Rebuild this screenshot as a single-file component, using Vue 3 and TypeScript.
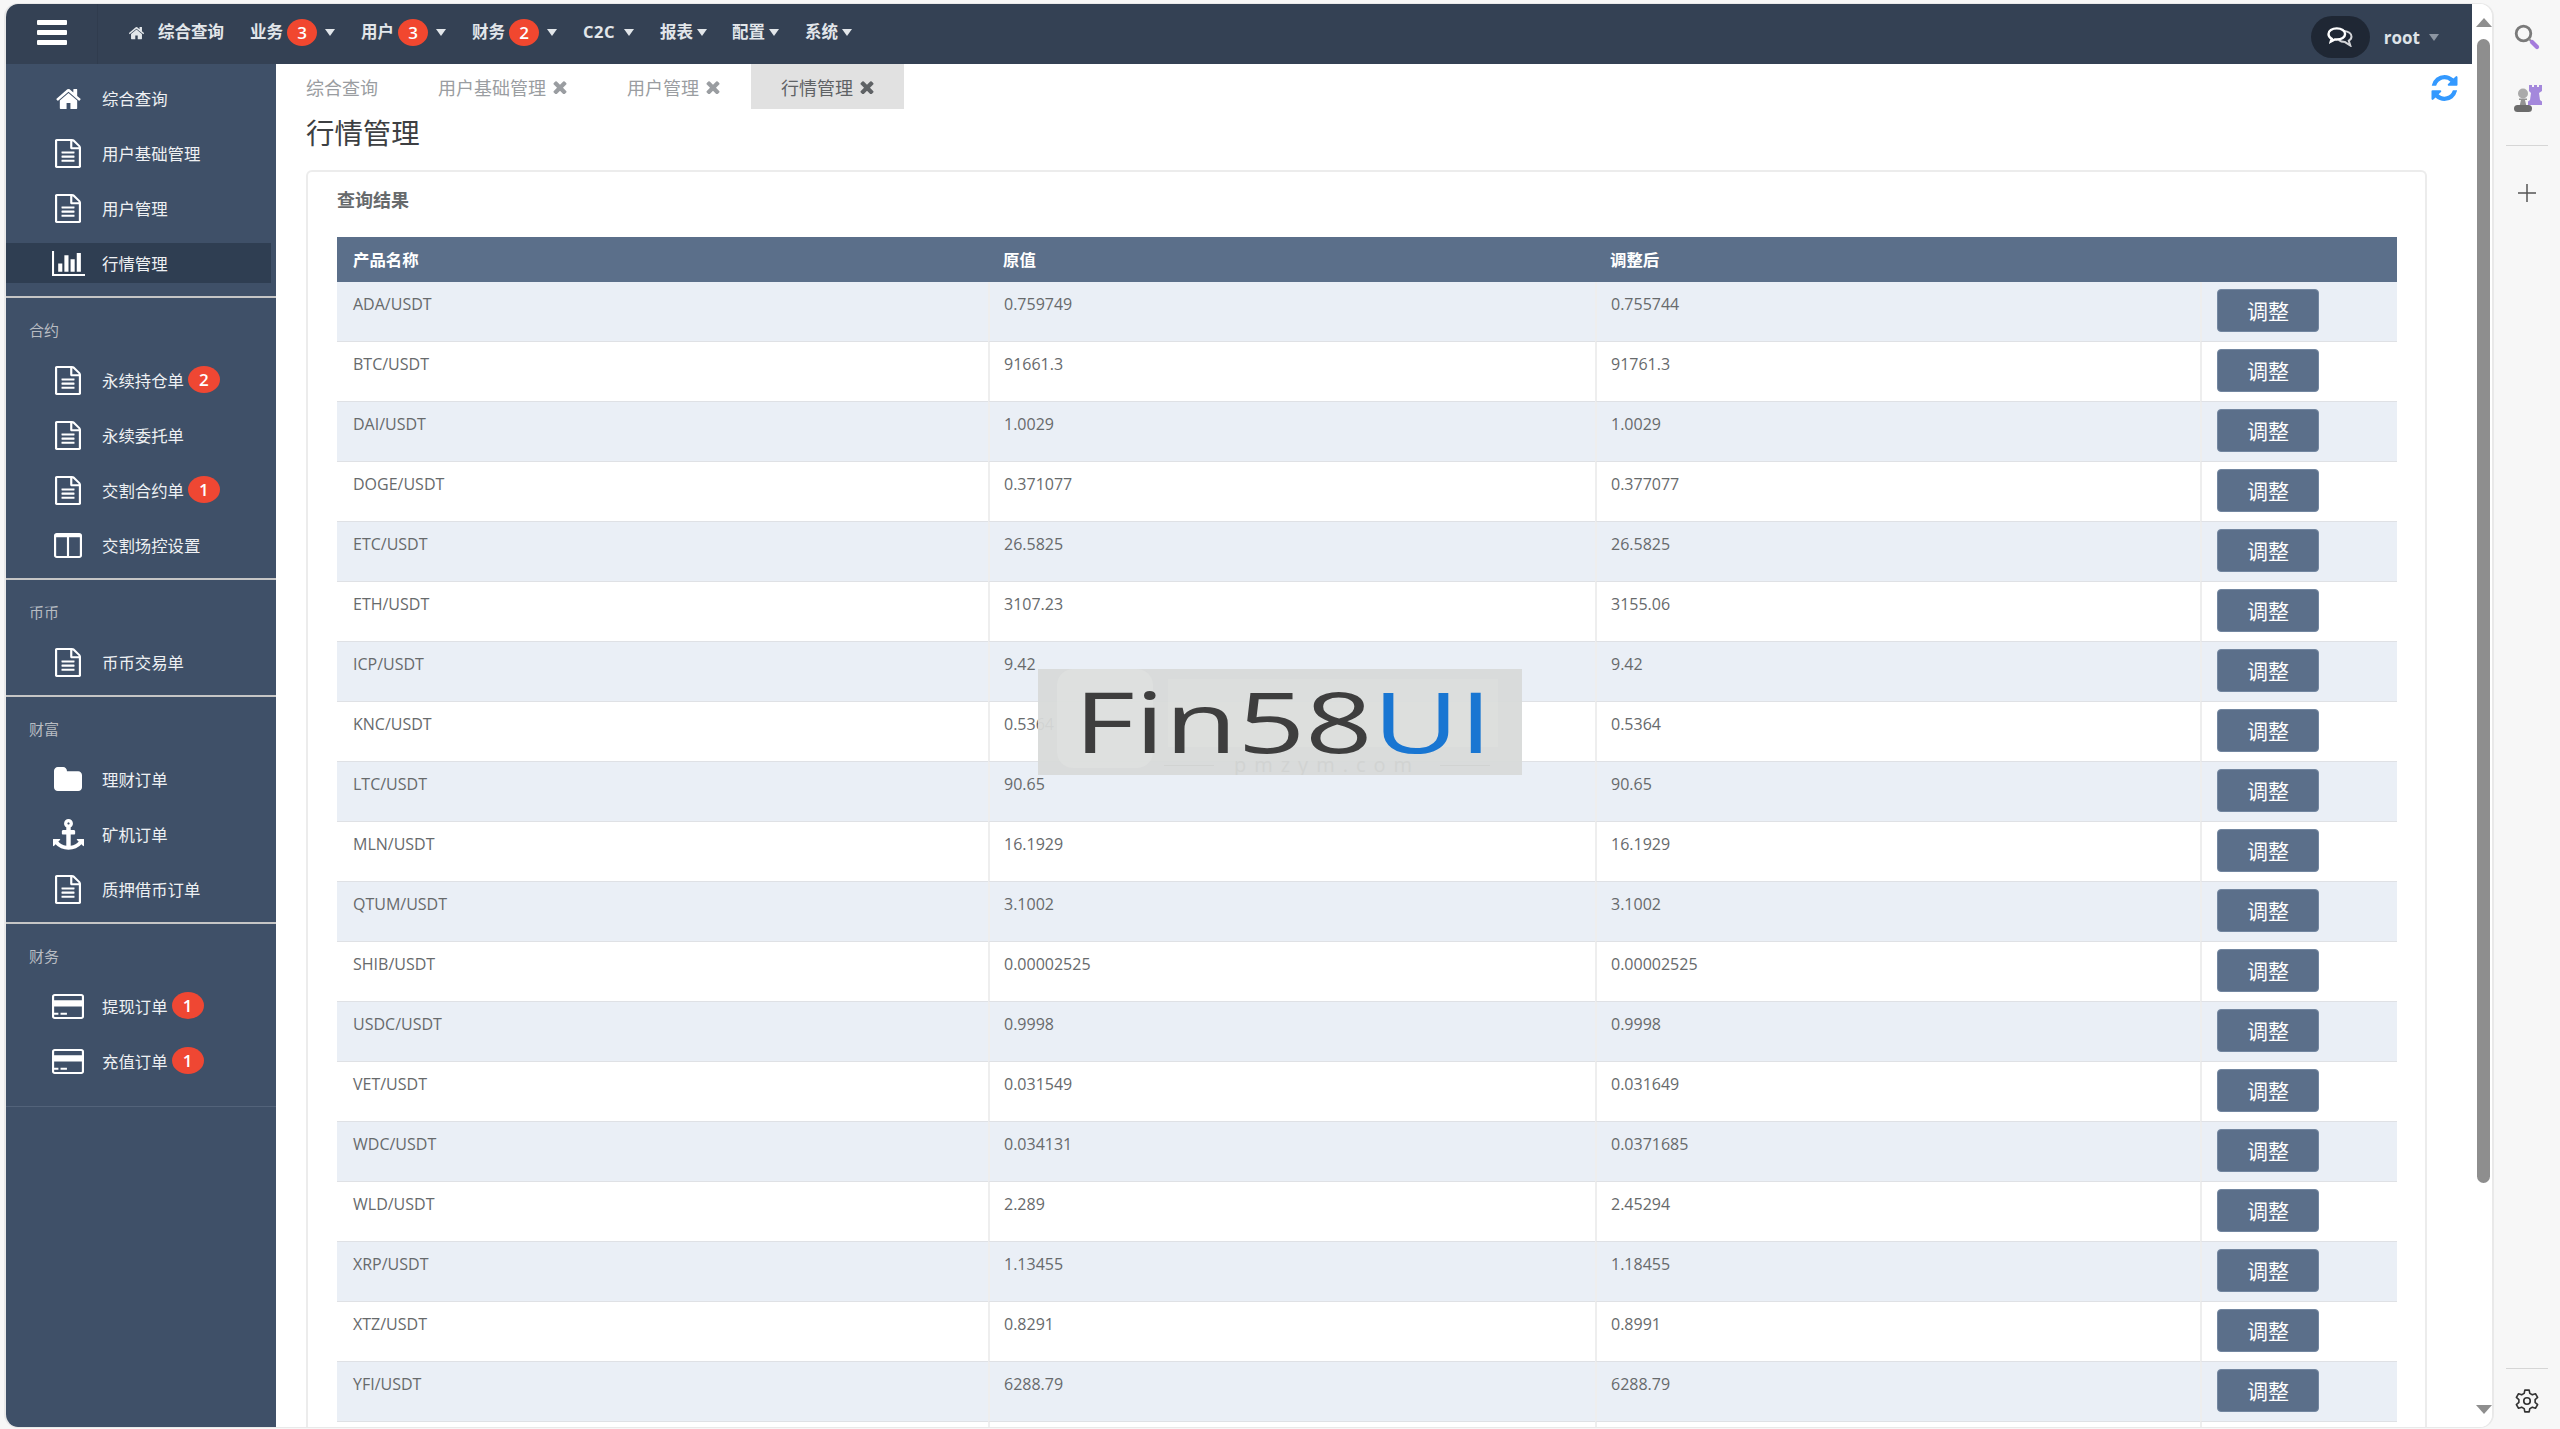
<script setup lang="ts">
const P: Record<string, { vb: string; d: string }> = {
  home: { vb: '0 128 1792 1408', d: 'M1472 992v480q0 26-19 45t-45 19h-384v-384h-256v384h-384q-26 0-45-19t-19-45v-480q0-1 .5-3t.5-3l575-474 575 474q1 2 1 6zm223-69l-62 74q-8 9-21 11h-3q-13 0-21-7l-692-577-692 577q-12 8-24 7-13-2-21-11l-62-74q-8-10-7-23.5t11-21.5l719-599q32-26 76-26t76 26l244 204v-195q0-14 9-23t23-9h192q14 0 23 9t9 23v408l219 182q10 8 11 21.5t-7 23.5z' },
  file: { vb: '128 0 1536 1792', d: 'M1596 380q28 28 48 76t20 88v1152q0 40-28 68t-68 28h-1344q-40 0-68-28t-28-68v-1600q0-40 28-68t68-28h896q40 0 88 20t76 48zm-444-244v376h376q-10-29-22-41l-313-313q-12-12-41-22zm384 1528v-1024h-416q-40 0-68-28t-28-68v-416h-768v1536h1280zm-1024-864q0-14 9-23t23-9h704q14 0 23 9t9 23v64q0 14-9 23t-23 9h-704q-14 0-23-9t-9-23v-64zm736 224q14 0 23 9t9 23v64q0 14-9 23t-23 9h-704q-14 0-23-9t-9-23v-64q0-14 9-23t23-9h704zm0 256q14 0 23 9t9 23v64q0 14-9 23t-23 9h-704q-14 0-23-9t-9-23v-64q0-14 9-23t23-9h704z' },
  chart: { vb: '0 128 2048 1536', d: 'M640 896v512h-256v-512h256zm384-512v1024h-256v-1024h256zm1024 1152v128h-2048v-1536h128v1408h1920zm-640-896v768h-256v-768h256zm384-384v1152h-256v-1152h256z' },
  columns: { vb: '64 128 1664 1536', d: 'M224 1536h608v-1152h-640v1120q0 13 9.5 22.5t22.5 9.5zm1376-32v-1120h-640v1152h608q13 0 22.5-9.5t9.5-22.5zm128-1216v1216q0 66-47 113t-113 47h-1344q-66 0-113-47t-47-113v-1216q0-66 47-113t113-47h1344q66 0 113 47t47 113z' },
  folder: { vb: '64 128 1664 1408', d: 'M1728 608v704q0 92-66 158t-158 66h-1216q-92 0-158-66t-66-158v-960q0-92 66-158t158-66h320q92 0 158 66t66 158v32h672q92 0 158 66t66 158z' },
  anchor: { vb: '0 0 1792 1792', d: 'M960 256q0-26-19-45t-45-19-45 19-19 45 19 45 45 19 45-19 19-45zm832 928v352q0 22-20 30-8 2-12 2-12 0-23-9l-93-93q-119 143-318.5 226.5t-429.5 83.5-429.5-83.5-318.5-226.5l-93 93q-9 9-23 9-4 0-12-2-20-8-20-30v-352q0-14 9-23t23-9h352q22 0 30 20 8 19-7 35l-100 100q67 91 189.5 153.5t271.5 82.5v-647h-192q-26 0-45-19t-19-45v-128q0-26 19-45t45-19h192v-163q-58-34-93-92.5t-35-128.5q0-106 75-181t181-75 181 75 75 181q0 70-35 128.5t-93 92.5v163h192q26 0 45 19t19 45v128q0 26-19 45t-45 19h-192v647q149-20 271.5-82.5t189.5-153.5l-100-100q-15-16-7-35 8-20 30-20h352q14 0 23 9t9 23z' },
  card: { vb: '0 128 1920 1536', d: 'M1760 128q66 0 113 47t47 113v1216q0 66-47 113t-113 47h-1600q-66 0-113-47t-47-113v-1216q0-66 47-113t113-47h1600zm-1600 128q-13 0-22.5 9.5t-9.5 22.5v224h1664v-224q0-13-9.5-22.5t-22.5-9.5h-1600zm1600 1280q13 0 22.5-9.5t9.5-22.5v-608h-1664v608q0 13 9.5 22.5t22.5 9.5h1600zm-1632-128v-128h256v128h-256zm384 0v-128h384v128h-384z' },
  times: { vb: '256 256 1280 1280', d: 'M1490 1322q0 40-28 68l-136 136q-28 28-68 28t-68-28l-294-294-294 294q-28 28-68 28t-68-28l-136-136q-28-28-28-68t28-68l294-294-294-294q-28-28-28-68t28-68l136-136q28-28 68-28t68 28l294 294 294-294q28-28 68-28t68 28l136 136q28 28 28 68t-28 68l-294 294 294 294q28 28 28 68z' },
  refresh: { vb: '128 128 1536 1536', d: 'M1639 1056q0 5-1 7-64 268-268 434.5t-478 166.5q-146 0-282.5-55t-243.5-157l-129 129q-19 19-45 19t-45-19-19-45v-448q0-26 19-45t45-19h448q26 0 45 19t19 45-19 45l-137 137q71 66 161 102t187 36q134 0 250-65t186-179q11-17 53-117 8-23 30-23h192q13 0 22.5 9.5t9.5 22.5zm25-800v448q0 26-19 45t-45 19h-448q-26 0-45-19t-19-45 19-45l138-138q-148-137-349-137-134 0-250 65t-186 179q-11 17-53 117-8 23-30 23h-199q-13 0-22.5-9.5t-9.5-22.5v-7q65-268 270-434.5t480-166.5q146 0 284 55.5t245 156.5l130-129q19-19 45-19t45 19 19 45z' },
}

const topNav = [
  { text: '业务', badge: 3 },
  { text: '用户', badge: 3 },
  { text: '财务', badge: 2 },
  { text: 'C2C', badge: 0 },
  { text: '报表', badge: 0 },
  { text: '配置', badge: 0 },
  { text: '系统', badge: 0 },
]

const tabs = [
  { text: '综合查询', close: false, active: false },
  { text: '用户基础管理', close: true, active: false },
  { text: '用户管理', close: true, active: false },
  { text: '行情管理', close: true, active: true },
]

interface MenuItem { icon: string; text: string; badge?: number; active?: boolean; w?: number; h?: number }
interface Section { label?: string; items: MenuItem[] }
const sections: Section[] = [
  { items: [
    { icon: 'home', text: '综合查询', w: 27, h: 22 },
    { icon: 'file', text: '用户基础管理' },
    { icon: 'file', text: '用户管理' },
    { icon: 'chart', text: '行情管理', active: true, w: 33, h: 25 },
  ] },
  { label: '合约', items: [
    { icon: 'file', text: '永续持仓单', badge: 2 },
    { icon: 'file', text: '永续委托单' },
    { icon: 'file', text: '交割合约单', badge: 1 },
    { icon: 'columns', text: '交割场控设置', w: 28, h: 25 },
  ] },
  { label: '币币', items: [{ icon: 'file', text: '币币交易单' }] },
  { label: '财富', items: [
    { icon: 'folder', text: '理财订单', w: 28, h: 24 },
    { icon: 'anchor', text: '矿机订单', w: 31, h: 31 },
    { icon: 'file', text: '质押借币订单' },
  ] },
  { label: '财务', items: [
    { icon: 'card', text: '提现订单', badge: 1, w: 32, h: 25 },
    { icon: 'card', text: '充值订单', badge: 1, w: 32, h: 25 },
  ] },
]

const rows: [string, string, string][] = [
  ['ADA/USDT', '0.759749', '0.755744'],
  ['BTC/USDT', '91661.3', '91761.3'],
  ['DAI/USDT', '1.0029', '1.0029'],
  ['DOGE/USDT', '0.371077', '0.377077'],
  ['ETC/USDT', '26.5825', '26.5825'],
  ['ETH/USDT', '3107.23', '3155.06'],
  ['ICP/USDT', '9.42', '9.42'],
  ['KNC/USDT', '0.5364', '0.5364'],
  ['LTC/USDT', '90.65', '90.65'],
  ['MLN/USDT', '16.1929', '16.1929'],
  ['QTUM/USDT', '3.1002', '3.1002'],
  ['SHIB/USDT', '0.00002525', '0.00002525'],
  ['USDC/USDT', '0.9998', '0.9998'],
  ['VET/USDT', '0.031549', '0.031649'],
  ['WDC/USDT', '0.034131', '0.0371685'],
  ['WLD/USDT', '2.289', '2.45294'],
  ['XRP/USDT', '1.13455', '1.18455'],
  ['XTZ/USDT', '0.8291', '0.8991'],
  ['YFI/USDT', '6288.79', '6288.79'],
  ['ZEC/USDT', '', ''],
]
</script>

<template>
  <div class="page">
    <div class="window">
      <div class="main">
        <header class="topbar">
          <div class="burger"><i></i><i></i><i></i></div>
          <nav class="topnav">
            <span class="nav-item">
              <svg class="nav-home" :viewBox="P.home.vb"><path :d="P.home.d" /></svg>
              <span>综合查询</span>
            </span>
            <span v-for="n in topNav" :key="n.text" class="nav-item" :class="{ latin: n.text === 'C2C', tight: n.text === '配置' }">
              {{ n.text }}
              <b v-if="n.badge" class="nav-badge">{{ n.badge }}</b>
              <i class="caret" :class="{ wide: n.badge }"></i>
            </span>
          </nav>
          <div class="user">
            <span class="chat">
              <svg viewBox="0 0 26 20" width="26" height="20" fill="none" stroke="#fff">
                <path stroke-width="2" opacity=".8" d="M17 4c4.500.4 7.500 2.800 7.500 5.600 0 1.800-1 3.200-2.700 4.100l1.500 4.800-5.300-3.400c-2.500 0-4.800-.7-6.300-2" />
                <path stroke-width="2.400" d="M9.800 1.400C5 1.400 1.500 3.800 1.500 7c0 2 1.200 3.700 3.200 4.700l-.9 2.900 4-2.200c.7.100 1.300.1 2 .1 4.800 0 8.300-2.400 8.300-5.500s-3.500-5.600-8.300-5.600z" />
              </svg>
            </span>
            <span class="user-name">root</span>
            <i class="caret gray"></i>
          </div>
        </header>

        <div class="body">
          <aside class="sidebar">
            <section v-for="(s, si) in sections" :key="si" class="side-section" :class="{ labelled: s.label }">
              <div v-if="s.label" class="side-label">{{ s.label }}</div>
              <div v-for="m in s.items" :key="m.text" class="side-item" :class="{ active: m.active }">
                <span class="side-icon">
                  <svg :viewBox="P[m.icon].vb" :width="m.w || 26" :height="m.h || 29" preserveAspectRatio="none"><path :d="P[m.icon].d" /></svg>
                </span>
                <span class="side-text">{{ m.text }}</span>
                <b v-if="m.badge" class="side-badge">{{ m.badge }}</b>
              </div>
            </section>
          </aside>

          <main class="content">
            <div class="tabs">
              <div v-for="t in tabs" :key="t.text" class="tab" :class="{ on: t.active }">
                <span>{{ t.text }}</span>
                <svg v-if="t.close" class="tab-x" :viewBox="P.times.vb"><path :d="P.times.d" /></svg>
              </div>
              <svg class="refresh" :viewBox="P.refresh.vb"><path :d="P.refresh.d" /></svg>
            </div>
            <h1 class="title">行情管理</h1>
            <div class="card">
              <h2 class="card-title">查询结果</h2>
              <table class="grid">
                <colgroup>
                  <col class="c1" /><col class="c2" /><col class="c3" /><col class="c4" />
                </colgroup>
                <thead>
                  <tr><th>产品名称</th><th>原值</th><th>调整后</th><th></th></tr>
                </thead>
                <tbody>
                  <tr v-for="r in rows" :key="r[0]">
                    <td>{{ r[0] }}</td>
                    <td>{{ r[1] }}</td>
                    <td>{{ r[2] }}</td>
                    <td class="act"><button class="adjust">调整</button></td>
                  </tr>
                </tbody>
              </table>
            </div>
          </main>
        </div>
      </div>

      <div class="scroll">
        <i class="arrow up"></i>
        <div class="track"><div class="thumb"></div></div>
        <i class="arrow down"></i>
      </div>
    </div>

    <aside class="rail">
      <svg class="rail-icon search" viewBox="0 0 26 26" width="26" height="26" fill="none">
        <circle cx="9.500" cy="9.500" r="7.300" stroke="#7a7a7a" stroke-width="2.800" />
        <path d="M15 15l2 2" stroke="#8f8f8f" stroke-width="2" />
        <path d="M18 18l5 5" stroke="#a57bdc" stroke-width="4.200" stroke-linecap="round" />
      </svg>
      <svg class="rail-icon chess" viewBox="0 0 30 28" width="30" height="28">
        <circle cx="10" cy="8.500" r="5" fill="#aaaaaa" />
        <path fill="#939393" d="M6 13.500h8v1.500h-2l1.200 5H6.800L8 15H6z" />
        <rect x="1" y="20" width="18" height="7" rx="3.500" fill="#6c6c6c" />
        <path fill="#a488dc" d="M16 0h3v2h2V0h3v2h2V0h3v6l-3 2 1 7 2 1.500V20H15v-3.500l2-1.500 1-7-2-2V0z" />
      </svg>
      <div class="rail-sep"></div>
      <svg class="rail-icon plus" viewBox="0 0 20 20" width="20" height="20"><path d="M10 1v18M1 10h18" stroke="#555" stroke-width="1.500" /></svg>
      <div class="rail-spacer"></div>
      <div class="rail-sep bottom"></div>
      <svg class="rail-icon gear" viewBox="0 0 24 24" width="26" height="26" fill="none" stroke="#333" stroke-width="1.500" stroke-linejoin="round">
        <circle cx="12" cy="12" r="3" />
        <path d="M10 2h4l.6 3 2.300 1.300 2.900-1 2 3.400-2.300 2v2.600l2.300 2-2 3.400-2.900-1-2.300 1.300-.6 3h-4l-.6-3-2.300-1.300-2.900 1-2-3.400 2.300-2v-2.600l-2.300-2 2-3.400 2.900 1 2.300-1.300z" />
      </svg>
    </aside>

    <div class="watermark">
      <div class="wm-logo"></div>
      <div class="wm-band"></div>
      <div class="wm-text">Fin58<span>UI</span></div>
      <div class="wm-sub"><i></i><span>pmzym.com</span><i></i></div>
    </div>
  </div>
</template>

<style>
html, body { margin: 0; padding: 0; height: 100%; overflow: hidden; background: #f7f7f7; }
</style>

<style scoped>
.page {
  position: relative;
  height: 1429px;
  display: flex;
  box-sizing: border-box;
  padding: 3px 0 1px 4px;
  font-family: "Open Sans", "Noto Sans CJK SC", sans-serif;
  font-size: 16px;
  color: #676a6c;
  overflow: hidden;
}
.window {
  width: 2490px;
  display: flex;
  box-sizing: border-box;
  border: solid #e9e9e9;
  border-width: 1px 2px;
  border-radius: 14px;
  overflow: hidden;
  background: #fff;
}
.main { width: 2466px; display: flex; flex-direction: column; }
.topbar {
  height: 60px;
  flex: none;
  background: #344154;
  display: flex;
  align-items: center;
}
.burger {
  width: 92px;
  height: 60px;
  box-sizing: border-box;
  border-right: 1px solid #303c4e;
  display: flex;
  flex-direction: column;
  gap: 5px;
  padding: 16px 0 0 31px;
}
.burger i { display: block; width: 30px; height: 5px; background: #fff; border-radius: 1px; }
.topnav { display: flex; align-items: center; gap: 26px; margin: -4px 0 0 30px; }
.nav-item {
  display: flex;
  align-items: center;
  color: #e2e6ea;
  font-weight: 700;
  font-size: 16.500px;
  line-height: 28px;
  white-space: nowrap;
}
.nav-item.latin { letter-spacing: .5px; }
.nav-item.latin .caret { margin-left: 9px; }
.nav-item.tight { margin-left: -1px; }
.nav-home { width: 17px; height: 15px; fill: #e2e6ea; margin-right: 13px; }
.nav-badge {
  width: 30px;
  height: 27px;
  margin-left: 4px;
  border-radius: 50%;
  background: #f1472f;
  color: #fff;
  font-size: 17px;
  font-weight: 600;
  line-height: 27px;
  text-align: center;
}
.caret {
  width: 0;
  height: 0;
  margin-left: 4px;
  border-left: 5.500px solid transparent;
  border-right: 5.500px solid transparent;
  border-top: 7px solid #e2e6ea;
}
.caret.wide { margin-left: 8px; }
.caret.gray { border-top-color: #8c95a2; margin-left: 9px; }
.user { margin-left: auto; display: flex; align-items: center; padding-right: 33px; margin-top: 6px; }
.chat {
  width: 59px;
  height: 42px;
  border-radius: 21px;
  background: #1f2734;
  display: flex;
  align-items: center;
  justify-content: center;
}
.user-name { margin-left: 14px; color: #dfe3e8; font-weight: 700; font-size: 17px; font-family: "Open Sans", sans-serif; }
.body { flex: 1; display: flex; min-height: 0; }
.sidebar { width: 270px; flex: none; background: #3f5068; }
.side-section {
  padding: 14px 5px 13px 0;
  border-bottom: 2px solid #c6c6c6;
  display: flex;
  flex-direction: column;
  gap: 15px;
}
.side-section:last-child { border-bottom: 1px solid #53637a; padding-bottom: 25px; }
.side-section.labelled { padding-top: 22px; }
.side-label {
  height: 20px;
  line-height: 20px;
  padding-left: 23px;
  margin-bottom: 5px;
  font-size: 15px;
  color: #b8bcc2;
}
.side-item {
  height: 40px;
  display: flex;
  align-items: center;
  color: #eef0f3;
  font-size: 16.400px;
}
.side-item.active { background: #2f3e52; }
.side-icon {
  width: 36px;
  margin-left: 44px;
  margin-right: 16px;
  display: flex;
  align-items: center;
  justify-content: center;
  flex: none;
}
.side-icon svg { fill: #fff; display: block; }
.side-text { white-space: nowrap; }
.side-badge {
  width: 32px;
  height: 27px;
  margin: -2px 0 0 4px;
  border-radius: 50%;
  background: #ef4733;
  color: #fff;
  font-size: 17px;
  font-weight: 600;
  line-height: 27px;
  text-align: center;
}
.content { flex: 1; min-width: 0; padding: 0 45px 0 30px; overflow: hidden; background: #fff; }
.tabs { height: 45px; display: flex; align-items: stretch; color: #9a9da1; font-size: 18px; }
.tab { display: flex; align-items: center; white-space: nowrap; }
.tab:nth-child(1) { padding-right: 60px; }
.tab:nth-child(2) { padding-right: 60px; }
.tab:nth-child(3) { padding-right: 31px; }
.tab.on { background: #e1e1e1; color: #5f6265; padding: 0 30px; }
.tab-x { width: 14px; height: 14px; margin-left: 7px; fill: currentColor; }
.refresh { width: 27px; height: 26px; margin: 11px -31px 0 auto; fill: #3399ff; }
.title { margin: 0 0 13px; height: 48px; line-height: 48px; font-size: 28.400px; font-weight: 400; color: #3d3f42; }
.card {
  border: 2px solid #ececec;
  border-radius: 6px;
  border-bottom: 0;
  padding: 13px 28px 0 29px;
}
.card-title { margin: 0 0 22px; height: 30px; line-height: 30px; font-size: 18px; font-weight: 700; color: #676a6c; }
.grid { border-collapse: separate; border-spacing: 0; table-layout: fixed; width: 2060px; }
.c1 { width: 651px; } .c2 { width: 607px; } .c3 { width: 605px; } .c4 { width: 197px; }
.grid th {
  height: 45px;
  padding: 0 16px 2px;
  box-sizing: border-box;
  background: #5b6f8a;
  color: #fff;
  font-size: 16.400px;
  font-weight: 700;
  text-align: left;
}
.grid th + th { padding-left: 15px; }
.grid td {
  height: 60px;
  box-sizing: border-box;
  padding: 11px 16px 0;
  line-height: 22px;
  vertical-align: top;
  border-bottom: 1.500px solid #dfe1e5;
}
.grid td + td { border-left: 2px solid #eeeeee; padding-left: 14px; }
.grid tbody tr:nth-child(odd) td { background: #eaeff6; }
.grid td.act { padding: 7px 0 0 15px; }
.adjust {
  display: block;
  width: 102px;
  height: 43px;
  border: 1px solid #7387a1;
  border-radius: 4px;
  background: #5b6f8a;
  color: #fff;
  font: 400 21px/38px "Open Sans", "Noto Sans CJK SC", sans-serif;
  padding: 0;
}
.scroll {
  width: 20px;
  box-sizing: border-box;
  padding-left: 3px;
  display: flex;
  flex-direction: column;
  align-items: center;
  background: #fff;
}
.arrow { display: block; width: 0; height: 0; border-left: 8px solid transparent; border-right: 8px solid transparent; }
.arrow.up { margin-top: 14px; border-bottom: 9px solid #8e8e8e; }
.arrow.down { margin-bottom: 13px; border-top: 9px solid #8e8e8e; }
.track { flex: 1; width: 13px; padding-top: 12px; }
.thumb { width: 13px; height: 1144px; border-radius: 6.500px; background: #8e8e8e; }
.rail {
  flex: 1;
  display: flex;
  flex-direction: column;
  align-items: center;
  padding: 21px 0 14px;
}
.rail-icon { display: block; flex: none; }
.chess { margin: 35px 0 0 2px; }
.rail-sep { width: 42px; height: 1px; background: #d6d6d6; flex: none; margin-top: 32px; }
.plus { margin-top: 37px; }
.rail-spacer { flex: 1; }
.rail-sep.bottom { margin-top: 0; }
.gear { margin-top: 19px; }
.watermark {
  position: absolute;
  left: 1038px;
  top: 669px;
  width: 484px;
  height: 106px;
  background: rgba(216, 218, 217, 0.94);
  overflow: hidden;
}
.wm-logo {
  position: absolute;
  left: 19px;
  top: 0;
  width: 96px;
  height: 99px;
  border-radius: 16px;
  background: rgba(225, 226, 225, 0.6);
}
.wm-band {
  position: absolute;
  left: 130px;
  top: 10px;
  width: 330px;
  height: 68px;
  background: rgba(225, 226, 225, 0.45);
}
.wm-text {
  position: absolute;
  left: 0;
  right: 0;
  top: 4px;
  text-align: center;
  font-family: "Open Sans", sans-serif;
  font-size: 84px;
  line-height: 96px;
  color: #3e3e3e;
  transform: translateX(3px) scaleX(1.41);
  white-space: nowrap;
}
.wm-text span { color: #1976d2; }
.wm-sub {
  position: absolute;
  left: 126px;
  width: 326px;
  bottom: 0;
  display: flex;
  align-items: center;
  gap: 20px;
  color: #d1d3d2;
  font-size: 20px;
  line-height: 20px;
  letter-spacing: 8px;
  white-space: nowrap;
}
.wm-sub i { display: block; flex: 1; height: 1px; background: #d1d3d2; }
</style>
